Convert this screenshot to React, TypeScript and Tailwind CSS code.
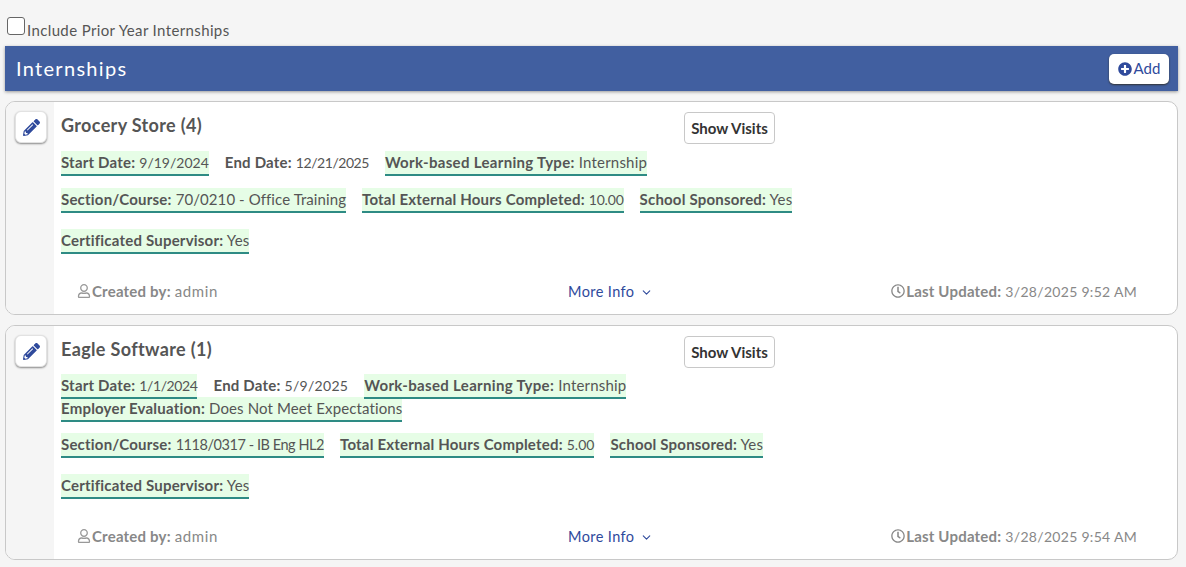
import { FaPencilAlt, FaPlusCircle, FaRegUser, FaRegClock } from "react-icons/fa";
import { LuChevronDown } from "react-icons/lu";

type Field = { label: string; value: string; plain?: boolean; br?: boolean; labelClass?: string; valueClass?: string };

const Pill = ({ label, value, plain, br, labelClass, valueClass }: Field) => (
    <span className={(br ? "" : "relative ") + (plain ? "mr-4 pt-[2px] pb-[3px] border-b-2 border-transparent" : "mr-4 pt-[2px] pb-[3px] bg-[#e6fde6] border-b-2 border-[#2e8b84]")}>
        <b className={"font-bold text-[#555] " + (labelClass ?? "")}>{label}:</b> <span className={"text-[#555] " + (valueClass ?? "")}>{value}</span>
    </span>
);

const Row = ({ fields, className }: { fields: Field[]; className: string }) => (
    <div className={"leading-[22px] text-[15px] tracking-[0.2px] " + className}>
        {fields.map((f) => (
            <span key={f.label}>
                {f.br && <br />}
                <Pill {...f} />
            </span>
        ))}
    </div>
);

type CardProps = {
    title: string;
    first: Field[];
    second: Field[];
    updated: string;
    className: string;
    headClass: string;
};

const Card = ({ title, first, second, updated, className, headClass }: CardProps) => (
    <div className={"flex border border-[#c8c8c8] rounded-[10px] overflow-hidden bg-white " + className}>
        <div className="w-[48px] shrink-0 bg-[#f5f5f5] pt-[9px] pl-[9px]">
            <button className="w-[32px] h-[32px] bg-white rounded-[6px] border border-[#e2e2e2] shadow-[0_1px_2px_#888] flex items-center justify-center text-[#2f4a9c]">
                <FaPencilAlt size={17} />
            </button>
        </div>
        <div className="flex-1 flex flex-col pl-[7px]">
            <div className={"relative " + headClass}>
                <h2 className="pt-[11px] text-[18px] leading-[24px] font-bold text-[#555] tracking-[0.35px]">{title}</h2>
                <button className="absolute left-[623px] top-[10px] w-[91px] h-[32px] bg-white border border-[#c8c8c8] rounded-[4px] text-[15px] leading-[20px] pb-[1px] font-bold text-[#333]">Show Visits</button>
            </div>
            <Row fields={first} className="" />
            <Row fields={second.slice(0, 3)} className="mt-[14px]" />
            <Row fields={second.slice(3)} className="mt-[18px]" />
            <div className="mt-auto h-[46px] flex items-center text-[15px] tracking-[0.2px] text-[#888]">
                <div className="flex items-center w-[507px] pl-[16px]">
                    <FaRegUser size={14} className="text-[#999]" />
                    <span className="ml-[1px]"><b className="font-bold">Created by:</b> <span className="tracking-[0.6px]">admin</span></span>
                </div>
                <div className="flex items-center text-[#2f4a9c] text-[14.5px] tracking-[0.4px] mt-[2px]">
                    More Info <LuChevronDown size={13} className="ml-[6px]" />
                </div>
                <div className="ml-auto mr-[40px] flex items-center">
                    <FaRegClock size={14} className="text-[#888]" />
                    <span className="ml-[1px]"><b className="font-bold">Last Updated:</b> <span className="text-[14px] tracking-[0.3px]">{updated}</span></span>
                </div>
            </div>
        </div>
    </div>
);

const App = () => {
    return (
        <div className="min-h-[567px] bg-[#f5f5f5] pl-[5px] pr-[8px] pt-[17px] font-['Lato','Liberation_Sans',sans-serif]">
            <label className="flex items-start h-[20px] text-[15px] tracking-[0.37px] text-[#555]">
                <input type="checkbox" className="appearance-none ml-[2px] w-[18px] h-[18px] bg-white border border-[#666] rounded-[3px]" />
                <span className="ml-[2px] mt-[5px] leading-[17px]">Include Prior Year Internships</span>
            </label>
            <div className="mt-[9px] h-[45px] bg-[#415fa0] shadow-[0_1px_3px_#999] flex items-center justify-between pl-[11px] pr-[9px]">
                <h1 className="text-[20px] leading-[26px] mb-[2px] tracking-[1.3px] text-white">Internships</h1>
                <button className="w-[60px] h-[30px] bg-white rounded-[5px] shadow-[0_1px_2px_#333] flex items-center justify-center text-[15px] text-[#2f4a9c]">
                    <FaPlusCircle size={14} className="mr-[2px]" /> Add
                </button>
            </div>
            <Card
                className="mt-[10px] h-[214px]"
                headClass="h-[49px]"
                title="Grocery Store (4)"
                first={[
                    { label: "Start Date", value: "9/19/2024", valueClass: "text-[14px] tracking-[0px]" },
                    { label: "End Date", value: "12/21/2025", plain: true, valueClass: "text-[14px] tracking-[-0.45px]" },
                    { label: "Work-based Learning Type", value: "Internship", labelClass: "tracking-[0.32px]" },
                ]}
                second={[
                    { label: "Section/Course", value: "70/0210 - Office Training", valueClass: "tracking-[0.08px]" },
                    { label: "Total External Hours Completed", value: "10.00", valueClass: "text-[14px] tracking-[-0.2px]" },
                    { label: "School Sponsored", value: "Yes" },
                    { label: "Certificated Supervisor", value: "Yes" },
                ]}
                updated="3/28/2025 9:52 AM"
            />
            <Card
                className="mt-[10px] h-[235px]"
                headClass="h-[48px]"
                title="Eagle Software (1)"
                first={[
                    { label: "Start Date", value: "1/1/2024", valueClass: "text-[14px] tracking-[-0.4px]" },
                    { label: "End Date", value: "5/9/2025", plain: true, valueClass: "text-[14px] tracking-[0.3px]" },
                    { label: "Work-based Learning Type", value: "Internship", labelClass: "tracking-[0.32px]" },
                    { label: "Employer Evaluation", value: "Does Not Meet Expectations", br: true, valueClass: "tracking-[0.12px]" },
                ]}
                second={[
                    { label: "Section/Course", value: "1118/0317 - IB Eng HL2", valueClass: "text-[14.5px] tracking-[-0.45px]" },
                    { label: "Total External Hours Completed", value: "5.00", valueClass: "text-[14px] tracking-[0px]" },
                    { label: "School Sponsored", value: "Yes" },
                    { label: "Certificated Supervisor", value: "Yes" },
                ]}
                updated="3/28/2025 9:54 AM"
            />
        </div>
    )
}

export default App
